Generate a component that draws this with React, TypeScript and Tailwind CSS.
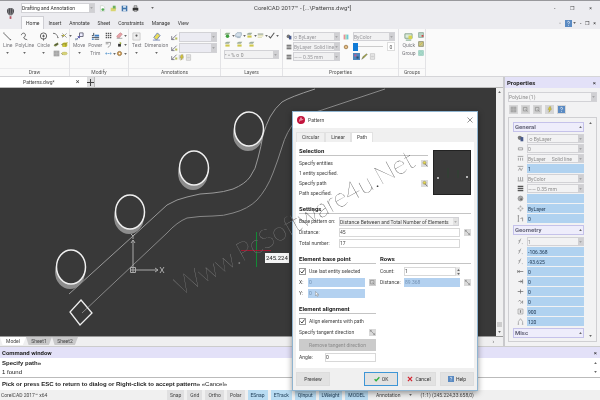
import type { ReactNode } from "react";
import { clsx } from "clsx";

const ICONS: Record<string, ReactNode> = {
  line: <path d="M1 1.500 8 8.500M.5 1h1M7.500 8.500h1.500" stroke="#555" />,
  polyline: <path d="M1.500 3.500C2 .5 6 .5 6 3.500S3 5 4.500 7s3 .5 3.500 2" stroke="#555" />,
  circle: (
    <g stroke="#555">
      <circle cx="5" cy="4.500" r="3.500" />
      <path d="M5 3v3M3.500 4.500h3M5 7v2.500" />
    </g>
  ),
  arc: <path d="M1 2c3 0 5 2 6 6M0 2h2M6 8h2" stroke="#555" />,
  cross: (
    <g>
      <path d="M2 2l6 6M8 2 2 8" stroke="#777" />
      <path d="M2 4h3v2H2z" fill="#c9c23a" />
    </g>
  ),
  leaf: (
    <g>
      <path d="M2 4.500 7 2l1 3-4 3-3-1z" fill="#7d8a4a" />
      <path d="M3 5.500 7 4" stroke="#333" />
    </g>
  ),
  box: (
    <g>
      <path d="M2 3.500 4 2h5v5L7 8.500H2z" fill="#cbc63c" />
      <path d="M2 4h5v4M7 4l2-2" stroke="#84802a" />
    </g>
  ),
  hatch: (
    <g>
      <path d="M1 1h8v8H1z" fill="#999" />
      <path d="M1 3h8M1 5h8M1 7h8M3 1v8M5 1v8M7 1v8" stroke="#ccc" strokeWidth=".5" />
    </g>
  ),
  pill: <ellipse cx="5" cy="5" rx="4" ry="2" fill="#d8d478" stroke="#a5a04c" strokeWidth=".5" />,
  move: (
    <g>
      <path d="M5 1h4v4H5z" stroke="#667" fill="#eef" />
      <path d="M1 9l4-4M3 5h2v2" stroke="#55a" />
      <path d="M0 7h3v2H0z" fill="#9ab" />
    </g>
  ),
  power: (
    <g>
      <path d="M3 1v3H1M1 6h8M4 8h5" stroke="#345" />
      <path d="M4 3h5v2H4z" fill="#3c7dc4" />
      <path d="M1 8h2" stroke="#3c7dc4" strokeWidth="1.500" />
    </g>
  ),
  grid: (
    <path
      d="M1 1h2v2H1zM4 1h2v2H4zM7 1h2v2H7zM1 4h2v2H1zM4 4h2v2H4zM7 4h2v2H7zM1 7h2v2H1zM4 7h2v2H4zM7 7h2v2H7z"
      fill="#555"
    />
  ),
  fillet: <path d="M1 2h7c0 4-1 6-4 7M1 4h4" stroke="#777" />,
  stretch: <path d="M1 5h8M2 3.500 1 5l1 1.500M8 3.500 9 5 8 6.500" stroke="#3d88c8" strokeDasharray="2 .7" />,
  eraser: (
    <g>
      <path d="M1 6 6 1l3 2-4 5H2z" fill="#e8a3a8" stroke="#a54a52" strokeWidth=".5" />
      <path d="M1 9h8" stroke="#888" />
    </g>
  ),
  brush: (
    <g>
      <path d="M3 4h4v4H3z" fill="#333" />
      <path d="M5 1 8 3 6 5z" fill="#9cab33" />
    </g>
  ),
  gear: (
    <g>
      <circle cx="5" cy="5" r="3" fill="#d9a866" stroke="#85612c" />
      <circle cx="5" cy="5" r="1" fill="#fff" />
    </g>
  ),
  text: (
    <g>
      <path d="M1 1h8v8H1z" fill="#eee" stroke="#ccc" />
      <circle cx="5" cy="4" r="1.200" fill="#555" />
    </g>
  ),
  dim: (
    <g>
      <path d="M2 6 6 1l3 3-4 5z" fill="#e9dc5a" stroke="#6a7fb0" />
      <path d="M1 9h8" stroke="#7d8ab8" />
    </g>
  ),
  slash: (
    <g>
      <path d="M1 8 8 1M1 3v5h4" stroke="#556" />
      <path d="M6 5h3v3H6z" fill="#b7bd5b" />
    </g>
  ),
  layer: (
    <g>
      <path d="M1 3 4 1h5L7 4H2z" fill="#9fae9d" />
      <path d="M2 5h6v3H2z" fill="#cfc84a" />
    </g>
  ),
  layerGreen: (
    <g>
      <path d="M1 3 3 1h6L7 4H1z" fill="#8fb48a" />
      <circle cx="5" cy="6" r="2.500" fill="#3fa03d" />
    </g>
  ),
  layerBlue: (
    <g>
      <path d="M1 3 3 1h6v4L7 7H1z" fill="#d3dfe9" stroke="#8fa3b4" />
      <path d="M3 8h5" stroke="#8fa3b4" />
    </g>
  ),
  layerList: (
    <g>
      <path d="M1 2h8v2H1z" fill="#a9b3a0" />
      <path d="M1 5h8v1H1zM1 7h6v1H1z" fill="#c9c878" />
    </g>
  ),
  check: <path d="M1 6 3.500 8.500 9 1" stroke="#555" strokeWidth="1.500" />,
  bulb: (
    <g>
      <circle cx="4" cy="4" r="3" fill="#777" />
      <path d="M5 3h4v6H5z" fill="#47598b" />
    </g>
  ),
  weights: <path d="M1 2h8M1 5h8M1 8h8" stroke="#555" strokeWidth="1.800" />,
  swatch: (
    <g>
      <path d="M1 1h3v8H1z" fill="#e98f9c" />
      <path d="M4 1h2v8H4z" fill="#a4d59b" />
      <path d="M6 1h3v8H6z" fill="#6bc8d8" />
    </g>
  ),
  match: (
    <g>
      <path d="M0 0h10v10H0z" fill="#4d86bd" />
      <path d="M2 2h3v3H2z" fill="#c75f8e" />
      <path d="M5 5h3v3H5z" fill="#2f4e6d" />
    </g>
  ),
  pencil: <path d="M1 9 3 5l5-4 1 1-5 5z" fill="#a5a743" stroke="#555" strokeWidth=".5" />,
  page: <path d="M2 1h6v8H2zM3 3h4M3 5h4M3 7h4" stroke="#bbb" />,
  quick: (
    <g>
      <path d="M1 2h8v5H1z" fill="#dcecdc" stroke="#84a088" />
      <path d="M5 4h4v4H5z" fill="#d6d552" />
      <path d="M2 9h6" stroke="#6a9a77" />
    </g>
  ),
  groupRed: (
    <g>
      <path d="M1 1h8v8H1z" fill="#b9d6c6" stroke="#6e8f80" />
      <path d="M6 5h3v3H6z" fill="#d04848" />
    </g>
  ),
  groupYellow: (
    <g>
      <path d="M1 1h8v8H1z" fill="#c8c78c" stroke="#6e6f50" />
      <path d="M2 8 8 2" stroke="#d6b32c" />
    </g>
  ),
  groupTeal: <path d="M1 1h8v8H1zM3 3h4v4H3z" fill="#b8e4d6" stroke="#83c0ad" />,
  newdoc: (
    <g>
      <path d="M2 1h4l2 2v6H2z" fill="#fff" stroke="#c8d2c8" />
      <circle cx="5.500" cy="6.500" r="2" fill="#55ad55" />
    </g>
  ),
  open: (
    <g>
      <path d="M1 4h8L8 9H1z" fill="#d9d571" />
      <path d="M4 1h4v4H4z" fill="#6bb05c" />
    </g>
  ),
  save: (
    <g>
      <path d="M1 1h8v8H1z" fill="#3f74ab" />
      <path d="M3 1h4v3H3zM3 6h4v3H3z" fill="#d4e2f0" />
    </g>
  ),
  print: (
    <g>
      <path d="M1 4h8v4H1z" fill="#333" />
      <path d="M3 1h4v3H3zM3 7h4v2H3z" fill="#ccc" stroke="#444" strokeWidth=".7" />
    </g>
  ),
  help: (
    <g>
      <path d="M0 0h10v10H0z" fill="#5a8ac2" />
      <path d="M3.500 3.500c0-2 3-2 3 0 0 1-1.500 1-1.500 2.500M5 7.500v1" stroke="#fff" />
    </g>
  ),
  pick: (
    <g>
      <path d="M0 0h10v10H0z" fill="#dcdcdc" />
      <circle cx="5" cy="4" r="2.200" fill="#e8d84e" stroke="#8d8a60" strokeWidth=".7" />
      <path d="M5.500 5 9 9" stroke="#555" />
    </g>
  ),
  flash: (
    <g>
      <path d="M1 1h7v7H1z" fill="#cfcfcf" />
      <path d="M5 1 3 5h2L4 9l4-5H6l1-3z" fill="#e3cf2f" stroke="#8d8430" strokeWidth=".5" />
    </g>
  ),
  measure: (
    <g>
      <path d="M0 0h10v10H0z" fill="#d9d9d9" />
      <path d="M2 2l6 6M2 4V2h2M8 6v2H6" stroke="#777" strokeWidth=".8" />
    </g>
  ),
  target: (
    <g>
      <path d="M0 0h10v10H0z" fill="#cfcfcf" />
      <path d="M2 2h5v5H2zM5 5l3 3" stroke="#8c8c8c" />
    </g>
  ),
  ok: <path d="M1 5.500 3.500 8 9 2" stroke="#2fae3c" strokeWidth="2.200" />,
  cancel: <path d="M1.500 1.500l7 7M8.500 1.500l-7 7" stroke="#d4202c" strokeWidth="2" />,
  sheet: <path d="M2 4h6v3H2z" stroke="#888" />,
  linetype: <path d="M1 2h8M2 4v4M5 4v4M8 4v4" stroke="#888" />,
  scale: <path d="M1 2h8M2 8l2-4 2 4 2-4" stroke="#888" />,
  bars: <path d="M2 8V3M5 8V3M8 8V3M1 8.500h8" stroke="#888" />,
  sphere: (
    <g>
      <circle cx="5" cy="5" r="3.500" fill="#aaa" stroke="#888" />
      <circle cx="6" cy="6" r="1.500" fill="#666" />
    </g>
  ),
  diamond: <path d="M5 1 6 3H4zM5 9 4 7h2zM1 5l2-1v2zM9 5 7 6V4z" stroke="#888" strokeWidth=".7" />,
  thick: <path d="M2 1v8M1 1h2M1 9h2M5 5l3-1v5" stroke="#777" />,
  vertex: <path d="M2 8C4 8 3 2 6 1M2 4h3M7 8h1" stroke="#888" />,
  start: <path d="M1 3v4M2 5h7M4 3.500 2 5l2 1.500" stroke="#666" />,
  end: <path d="M8 2v6M2 5h6M5 3.500 7 5 5 6.500" stroke="#666" />,
  plus: <path d="M1 5h8M5 2v6" stroke="#666" />,
  elev: <path d="M2 5l2-2 1 2M5 8l3-4v4" stroke="#777" />,
  area: (
    <g>
      <path d="M1.500 1.500h7v7h-7z" stroke="#999" />
      <path d="M4 3h2v4H4z" fill="#888" />
    </g>
  ),
  length: <path d="M2 9V5l3-4 3 4v4M1 9h2M7 9h2" stroke="#999" />,
};

function Icon({ name, className = "size-2" }: { name: string; className?: string }) {
  return (
    <svg viewBox="0 0 10 10" fill="none" className={clsx("shrink-0", className)} aria-hidden="true">
      {ICONS[name]}
    </svg>
  );
}

function Caret({ className = "" }: { className?: string }) {
  return (
    <svg viewBox="0 0 4 3" className={clsx("h-[2px] w-[3px] shrink-0", className)} aria-hidden="true">
      <path d="M0 0h4L2 3z" fill="#666" />
    </svg>
  );
}

type SelectProps = { label: string; value: string; id?: string; className?: string; arrow?: string };

function Select({ label, value, id, className, arrow = "bg-[#d0d0d3]" }: SelectProps) {
  return (
    <span className={clsx("flex min-w-0 items-stretch border border-[#d2d2d6]", className)}>
      <select id={id} aria-label={label} defaultValue={value} className="min-w-0 flex-1 appearance-none bg-transparent">
        <option>{value}</option>
      </select>
      <span className={clsx("grid w-[5px] shrink-0 place-items-center", arrow)}>
        <Caret className="opacity-40" />
      </span>
    </span>
  );
}

function IconButton({ icon, label, caret, size }: { icon: string; label: string; caret?: boolean; size?: string }) {
  return (
    <button aria-label={label} className="flex items-center gap-px">
      <Icon name={icon} className={size ?? "size-[7px]"} />
      {caret && <Caret />}
    </button>
  );
}

function BigTool({ icon, label, second }: { icon: string; label: string; second?: string }) {
  return (
    <button className="flex flex-col items-center self-start leading-[8px] text-[#77777c]">
      <Icon name={icon} className="size-[9px]" />
      <span>{label}</span>
      {second ? <span>{second}</span> : <Caret className="mt-[3px]" />}
    </button>
  );
}

function Group({ title, className, children }: { title: string; className: string; children: ReactNode }) {
  return (
    <section className={clsx("flex shrink-0 flex-col border-r border-[#e3e3e6]", className)}>
      <div className="flex flex-1 gap-[3px] px-[3px] pt-[3px]">{children}</div>
      <h2 className="border-t border-[#ececee] text-center leading-[7px] text-[#555]">{title}</h2>
    </section>
  );
}

const QUICK = [
  ["newdoc", "New"],
  ["open", "Open"],
  ["save", "Save"],
  ["print", "Print"],
];

const MENU = ["Home", "Insert", "Annotate", "Sheet", "Constraints", "Manage", "View"];

function TitleBar() {
  return (
    <header className="flex h-[29px] border-t border-[#98989c] bg-[#ececf0]">
      <svg viewBox="0 0 10 14" className="mx-[6px] mt-[6px] h-[13px] w-[9px] shrink-0" aria-hidden="true">
        <path d="M5 1c5 0 5 5 1.500 8h-3C0 6 0 1 5 1z" fill="#4b4b50" />
        <path d="M5 1v8M3 2c-1 2 0 5 1 7M7 2c1 2 0 5-1 7" stroke="#bbb" strokeWidth=".5" fill="none" />
        <path d="M4 10h2v3H4z" fill="#b55563" />
      </svg>
      <div className="flex min-w-0 flex-1 flex-col justify-between">
        <div className="flex items-center pt-[2px]">
          <Select label="Workspace" value="Drafting and Annotation" className="h-[10px] w-[74px] bg-white text-[#333]" />
          <div className="flex items-center gap-[4px] pl-1">
            {QUICK.map(([icon, label]) => (
              <IconButton key={icon} icon={icon} label={label} />
            ))}
            <button aria-label="Customize" className="pl-2">
              <Caret />
            </button>
          </div>
          <h1 className="flex-1 pl-[100px] text-[6px] text-[#444]">CorelCAD 2017™ - [...\Patterns.dwg*]</h1>
          <div className="flex w-[46px] justify-between pr-2 text-[#444]">
            <button aria-label="Minimize">-</button>
            <button aria-label="Restore">❐</button>
            <button aria-label="Close">×</button>
          </div>
        </div>
        <nav className="flex items-end text-[#333]">
          {MENU.map((item) => (
            <button
              key={item}
              className={clsx("px-1 leading-[12px]", item === "Home" && "border border-b-0 border-[#cfcfd4] bg-[#fafafb]")}
            >
              {item}
            </button>
          ))}
          <div className="ml-auto flex items-center gap-1 pr-1 pb-[2px]">
            <button aria-label="Favourites" className="text-[#999]">◦</button>
            <IconButton icon="help" label="Help" caret />
            <button aria-label="Minimize drawing">-</button>
            <button aria-label="Restore drawing">❐</button>
            <button aria-label="Close drawing">×</button>
          </div>
        </nav>
      </div>
    </header>
  );
}

function Ribbon() {
  return (
    <div className="flex h-[48px] overflow-hidden border-b border-[#d5d5d8] bg-[#fafafa]">
      <Group title="Draw" className="w-[70px]">
        <BigTool icon="line" label="Line" />
        <BigTool icon="polyline" label="PolyLine" />
        <BigTool icon="circle" label="Circle" />
        <div className="-mr-[3px] grid grid-cols-2 content-start gap-x-px gap-y-[2px]">
          <IconButton icon="arc" label="Arc" caret />
          <IconButton icon="cross" label="Point" caret />
          <IconButton icon="leaf" label="Ellipse" caret />
          <IconButton icon="box" label="Region" />
          <IconButton icon="hatch" label="Hatch" caret />
          <IconButton icon="pill" label="Cloud" />
        </div>
      </Group>
      <Group title="Modify" className="w-[59px]">
        <BigTool icon="move" label="Move" />
        <BigTool icon="power" label="Power" second="Trim" />
        <div className="ml-auto grid grid-cols-2 content-start gap-x-px gap-y-[2px]">
          <IconButton icon="grid" label="Pattern" />
          <IconButton icon="eraser" label="Delete" caret />
          <IconButton icon="fillet" label="Fillet" />
          <IconButton icon="brush" label="Copy properties" caret />
          <IconButton icon="stretch" label="Stretch" caret />
          <IconButton icon="gear" label="Explode" caret />
        </div>
      </Group>
      <Group title="Annotations" className="w-[92px]">
        <BigTool icon="text" label="Text" />
        <BigTool icon="dim" label="Dimension" />
        <div className="flex min-w-0 flex-1 flex-col gap-px">
          <div className="flex items-center gap-px">
            <Icon name="slash" className="size-[7px]" />
            <Select label="Text style" value="" className="h-[10px] flex-1 bg-[#ebebf2]" />
          </div>
          <div className="flex items-center gap-px">
            <Icon name="slash" className="size-[7px]" />
            <Select label="Dimension style" value="" className="h-[10px] flex-1 bg-[#ebebf2]" />
          </div>
          <div className="flex">
            <IconButton icon="slash" label="Leader" />
            <IconButton icon="flash" label="Tolerance" />
            <IconButton icon="page" label="Table" />
          </div>
        </div>
      </Group>
      <Group title="Layers" className="w-[62px]">
        <div className="flex min-w-0 flex-1 flex-col gap-[2px]">
          <div className="flex justify-between">
            <IconButton icon="layerGreen" label="Layers manager" caret />
            <IconButton icon="layerBlue" label="Layer state" caret />
            <IconButton icon="layer" label="Isolate layer" caret />
            <IconButton icon="layerList" label="Layer list" caret />
            <IconButton icon="check" label="Activate layer" caret />
          </div>
          <div className="flex gap-[5px]">
            <IconButton icon="layer" label="Freeze layer" />
            <IconButton icon="layer" label="Hide layer" />
            <IconButton icon="layer" label="Lock layer" />
          </div>
          <Select label="Active layer" value="• ▫ % ○ 0" className="h-[9px] bg-[#f1f1f2] text-[#888]" />
        </div>
      </Group>
      <Group title="Properties" className="w-[116px]">
        <div className="flex w-[54px] flex-col gap-px text-[#97979b]">
          {[
            ["bulb", "Line colour", "○ ByLayer"],
            ["weights", "Line style", "ByLayer\u00a0 Solid line"],
            ["weights", "Line weight", "—— 0.35 mm"],
          ].map(([icon, label, value]) => (
            <div key={label} className="flex items-center gap-px">
              <Icon name={icon} className="size-[6px]" />
              <Select label={label} value={value} className="h-[9px] flex-1 bg-[#f1f1f2]" />
            </div>
          ))}
        </div>
        <div className="flex min-w-0 flex-1 flex-col gap-px text-[#97979b]">
          <div className="flex items-center gap-1">
            <Icon name="swatch" className="size-[6px]" />
            <Select label="Print colour" value="ByColor" className="h-[9px] flex-1 bg-[#f1f1f2]" />
          </div>
          <div className="flex h-[9px] items-center gap-1">
            <Icon name="gear" className="size-[6px]" />
            <input
              type="range"
              aria-label="Transparency"
              defaultValue={0}
              className="h-2 min-w-0 flex-1 appearance-none bg-[linear-gradient(#ccc,#ccc)] bg-[length:100%_1px] bg-center bg-no-repeat [&::-webkit-slider-thumb]:h-2 [&::-webkit-slider-thumb]:w-[5px] [&::-webkit-slider-thumb]:appearance-none [&::-webkit-slider-thumb]:bg-[#0f7ad6]"
            />
            <input aria-label="Transparency value" defaultValue="0" className="h-[9px] w-2 border border-[#ddd] bg-white text-center text-[#555]" />
          </div>
          <div className="flex h-[9px] items-center gap-px pl-[10px]">
            <IconButton icon="match" label="Match" />
            <IconButton icon="pencil" label="Edit" />
            <IconButton icon="page" label="List" />
          </div>
        </div>
      </Group>
      <Group title="Groups" className="w-[27px]">
        <BigTool icon="quick" label="Quick" second="Group" />
        <div className="flex flex-col gap-[3px]">
          <IconButton icon="groupRed" label="Ungroup" size="size-[6px]" />
          <IconButton icon="groupYellow" label="Edit group" size="size-[6px]" />
          <IconButton icon="groupTeal" label="Group manager" size="size-[6px]" />
        </div>
      </Group>
    </div>
  );
}

const HOLES = [
  { x: 249, y: 129 },
  { x: 194, y: 168 },
  { x: 130, y: 212 },
  { x: 71, y: 267 },
];

function Drawing() {
  return (
    <svg className="block size-full" fill="none">
      <g transform="translate(0 -88)">
        <path
          d="M69 294 143 227 167 205Q177 199 187 197 200 193 213 193 224 192 233 189 245 184 250 177 256 169 258 158 261 147 263 135 266 125 270 117 275 108 282 102 290 97 315 89"
          stroke="#999"
        />
        <path
          d="M82 313 133 265 167 233Q177 222 187 218 200 216 213 216 224 216 233 213 248 209 257 200 267 189 273 173 278 160 282 147 286 132 297 119 305 115 322 110L385 89"
          stroke="#888"
        />
        {HOLES.map((h) => (
          <g key={h.x}>
            <ellipse cx={h.x - 1} cy={h.y + 5} rx="15" ry="17" fill="#8d8d8d" />
            <ellipse cx={h.x} cy={h.y} rx="14.500" ry="17" fill="#393939" stroke="#f0f0f0" strokeWidth="1.500" />
          </g>
        ))}
        <path d="M81 300 92 313 80 325 70 312z" stroke="#eee" strokeWidth="1.300" />
        <g stroke="#aaa">
          <path d="M133 267V240M131 243l2-3 2 3M136 270h22M155 268l3 2-3 2M130.500 267.500h5v5h-5zM133 267v6M130 270h6" />
          <path d="M131 234l2 2 2-2M133 236v3M160 267l4 6M164 267l-4 6" />
        </g>
        <path d="M256.500 232v35" stroke="#128a35" />
        <path d="M241 250.500h30" stroke="#a01830" />
      </g>
    </svg>
  );
}

function Workspace() {
  return (
    <main className="flex min-w-0 flex-1 flex-col">
      <div className="flex h-[11px] items-stretch border-b border-[#bbb] bg-[#efeff1] text-[#444]">
        <div className="flex w-[87px] items-center bg-white pl-[23px]">
          <span className="flex-1 leading-[9px]">Patterns.dwg*</span>
          <button aria-label="Close tab" className="w-[19px] text-center text-[7px]">×</button>
        </div>
        <button aria-label="New tab" className="grid w-2 place-items-center border-r border-[#bbb] bg-[#dededf]">
          <svg viewBox="0 0 7 7" className="size-[7px]">
            <path d="M3.500 0v7M0 3.500h7" stroke="#444" />
          </svg>
        </button>
      </div>
      <div className="flex min-h-0 flex-1">
        <div className="relative min-w-0 flex-1 overflow-hidden bg-[#393939]">
          <Drawing />
          <output className="absolute top-[165px] left-[265px] bg-[#f4f4f4] px-px text-[6px] leading-[10px] text-[#222]">245.224</output>
        </div>
        <div className="flex w-[7px] flex-col items-center justify-between bg-[#f0f0f0] py-[3px]">
          <Caret className="rotate-180" />
          <span className="mt-auto mb-1 h-[5px] w-[5px] bg-[#ccc]" />
          <Caret />
        </div>
      </div>
      <div className="flex h-[10px] items-start border-t border-[#999] bg-[#efeff0] text-[#444]">
        {["Model", "Sheet1", "Sheet2"].map((name) => (
          <button
            key={name}
            className={clsx(
              "w-[26px] leading-[8px] [clip-path:polygon(0_0,100%_0,88%_100%,10%_100%)]",
              name === "Model" ? "bg-white" : "bg-[#c9c9ca]",
            )}
          >
            {name}
          </button>
        ))}
        <span className="ml-auto pr-[9px] leading-[8px]">›</span>
      </div>
    </main>
  );
}

type Prop = { icon: string; label: string; value: string; kind?: "select" };

const GENERAL: Prop[] = [
  { icon: "bulb", label: "Line colour", value: "\u00a0○ ByLayer", kind: "select" },
  { icon: "sheet", label: "Layer", value: "0", kind: "select" },
  { icon: "linetype", label: "Line style", value: "ByLayer\u00a0\u00a0\u00a0\u00a0 Solid line", kind: "select" },
  { icon: "scale", label: "Line scale", value: "1" },
  { icon: "bars", label: "Print style", value: "ByColor", kind: "select" },
  { icon: "weights", label: "Line weight", value: "—— 0.35 mm", kind: "select" },
  { icon: "sphere", label: "Hyperlink", value: "" },
  { icon: "diamond", label: "Transparency", value: "ByLayer" },
  { icon: "thick", label: "Thickness", value: "0" },
];

const GEOMETRY: Prop[] = [
  { icon: "vertex", label: "Vertex", value: "1", kind: "select" },
  { icon: "vertex", label: "Vertex X", value: "-106.368" },
  { icon: "vertex", label: "Vertex Y", value: "-93.625" },
  { icon: "start", label: "Start width", value: "0" },
  { icon: "end", label: "End width", value: "0" },
  { icon: "plus", label: "Global width", value: "0" },
  { icon: "elev", label: "Elevation", value: "0" },
  { icon: "area", label: "Area", value: "900" },
  { icon: "length", label: "Length", value: "120" },
];

function PropSection({ title, rows }: { title: string; rows: Prop[] }) {
  return (
    <section>
      <h3 className="flex items-center justify-between border border-[#c5c2ea] bg-[#eeedfb] px-px text-[6px] leading-[8px] font-bold text-[#66667a]">
        {title}
        <Caret className="rotate-180" />
      </h3>
      {rows.length > 0 && (
        <div className="flex flex-col gap-px pt-[2px] pb-[2px] pl-1">
          {rows.map((row) => (
            <div key={row.label} className="flex h-[9px] items-center gap-[3px]">
              <Icon name={row.icon} className="size-[7px]" />
              {row.kind ? (
                <Select label={row.label} value={row.value} className="h-[9px] flex-1 bg-[#f2f2f3] text-[#8b8b8b]" />
              ) : (
                <input aria-label={row.label} defaultValue={row.value} className="h-[9px] min-w-0 flex-1 bg-[#b0d2f0] pl-px text-[#1c3550]" />
              )}
            </div>
          ))}
        </div>
      )}
    </section>
  );
}

function PropertiesPanel() {
  return (
    <aside className="flex w-[97px] shrink-0 flex-col border-l-2 border-[#c9c9cc] bg-[#f2f2f3]">
      <div className="flex items-center justify-between bg-[#e3e1f8] px-[2px] text-[6px] leading-[11px] text-[#222]">
        <h2 className="font-bold">Properties</h2>
        <button aria-label="Close properties" className="pr-[2px]">×</button>
      </div>
      <div className="flex min-h-0 flex-1 flex-col gap-[3px] px-[3px] pt-1 pb-1">
        <Select label="Selected entity" value="PolyLine (1)" className="h-[10px] shrink-0 bg-[#f4f4f5] text-[#8b8b8b]" />
        <div className="flex gap-[3px] pl-px">
          {["hatch", "target", "target", "flash", "help"].map((icon, i) => (
            <button key={i} aria-label={`Selection tool ${i + 1}`} className="bg-[#d6d6d7] p-px">
              <Icon name={icon} className="size-[7px]" />
            </button>
          ))}
        </div>
        <div className="flex min-h-0 flex-1 overflow-hidden border border-[#cfcfd2]">
          <div className="min-w-0 flex-1 pt-1 pl-1">
            <PropSection title="General" rows={GENERAL} />
            <PropSection title="Geometry" rows={GEOMETRY} />
            <PropSection title="Misc" rows={[]} />
          </div>
          <div className="flex w-3 flex-col items-center justify-between py-1">
            <Caret className="rotate-180" />
            <Caret />
          </div>
        </div>
      </div>
    </aside>
  );
}

function CommandWindow() {
  return (
    <section className="border-t border-[#ccc] bg-white text-[6px] text-[#222]">
      <div className="flex items-center justify-between bg-[#e3e1f8] pr-[3px] pl-[2px] leading-[11px]">
        <h2 className="font-bold">Command window</h2>
        <button aria-label="Close command window">×</button>
      </div>
      <div className="flex justify-between border-b border-[#bbb] pr-[3px] pl-[2px]">
        <div className="pt-px font-['Liberation_Sans',sans-serif] leading-[9px]">
          <p className="font-bold">Specify path»</p>
          <p>1 found</p>
        </div>
        <div className="flex flex-col justify-around py-px">
          <Caret className="rotate-180" />
          <Caret />
        </div>
      </div>
      <p className="pl-[2px] font-['Liberation_Sans',sans-serif] leading-[12px]">
        <b>Pick or press ESC to return to dialog or Right-click to accept pattern»</b> «Cancel»
      </p>
    </section>
  );
}

const MODES = [
  { name: "Snap" },
  { name: "Grid" },
  { name: "Ortho" },
  { name: "Polar" },
  { name: "ESnap", on: true },
  { name: "ETrack", on: true },
  { name: "QInput", on: true },
  { name: "LWeight", on: true },
  { name: "MODEL", on: true },
];

function StatusBar() {
  return (
    <footer className="flex h-[10px] items-stretch bg-[#f0f0f0] leading-[10px] text-[#444]">
      <span className="w-[167px] pl-px">CorelCAD 2017™ x64</span>
      <div className="flex gap-[3px]">
        {MODES.map((m) => (
          <button key={m.name} className={clsx("px-[3px]", m.on ? "bg-[#b9dcf2] text-[#23425c]" : "bg-[#e0e0e1]")}>
            {m.name}
          </button>
        ))}
      </div>
      <button className="flex items-center gap-[9px] pr-1 pl-2">
        Annotation <Caret />
      </button>
      <span className="pl-1">(1:1) (245.224,33.658,0)</span>
    </footer>
  );
}

function Heading({ children }: { children: ReactNode }) {
  return <h3 className="border-b border-[#c4c4c4] text-[6px] leading-[9px] font-bold text-[#222]">{children}</h3>;
}

function Preview() {
  return (
    <svg className="h-[45px] w-[38px] shrink-0 border border-[#222] bg-[#393939]" aria-label="Preview">
      <path d="M3 27h2M32 26h2" stroke="#ddd" strokeWidth="1.500" />
      <path d="M14 17v10M24 19v8" stroke="#2f4433" />
    </svg>
  );
}

const FIELD = "h-[9px] min-w-0 flex-1 border border-[#d8d8d8] bg-white";
const FIELD_BLUE = "h-[9px] min-w-0 flex-1 bg-[#b3d1f0] pl-px text-[#7492b3]";

function PatternDialog() {
  return (
    <div
      role="dialog"
      aria-label="Pattern"
      className="absolute top-[111px] left-[292px] w-[186px] border border-[#8fb4d0] bg-[#f0f0f0] text-[#444] shadow-[0_2px_6px_#0006]"
    >
      <div className="flex h-[16px] items-center gap-[3px] bg-white px-1">
        <svg viewBox="0 0 10 10" className="size-[8px]" aria-hidden="true">
          <circle cx="5" cy="5" r="5" fill="#c2143c" />
          <path d="M3 7 5 2l1 3 2-1M3 5h3" stroke="#f2b6c3" fill="none" />
        </svg>
        <span className="flex-1">Pattern</span>
        <button aria-label="Close">
          <svg viewBox="0 0 6 6" className="size-[6px]">
            <path d="M.5.5l5 5M5.500.5l-5 5" stroke="#777" strokeWidth=".8" />
          </svg>
        </button>
      </div>
      <div className="px-[3px] pt-1">
        <div role="tablist" className="flex items-end">
          {["Circular", "Linear", "Path"].map((tab) => (
            <button
              key={tab}
              role="tab"
              aria-selected={tab === "Path"}
              className={clsx("border border-b-0 border-[#e2e2e2] px-[5px] leading-[9px]", tab === "Path" ? "bg-white" : "bg-[#f0f0f0]")}
            >
              {tab}
            </button>
          ))}
        </div>
        <div className="bg-white px-[3px] pt-[4px] pb-[6px]">
          <div className="flex justify-between">
            <div className="w-[129px]">
              <Heading>Selection</Heading>
              <div className="flex flex-col pt-[2px] leading-[10px]">
                <div className="flex items-center justify-between">
                  Specify entities <IconButton icon="pick" label="Specify entities" />
                </div>
                <p>1 entity specified.</p>
                <div className="flex items-center justify-between">
                  Specify path <IconButton icon="pick" label="Specify path" />
                </div>
                <p>Path specified.</p>
              </div>
            </div>
            <div className="pt-1">
              <Preview />
            </div>
          </div>

          <div className="pt-[6px]">
            <Heading>Settings</Heading>
          </div>
          <div className="flex flex-col gap-[2px] pt-[3px] leading-[9px]">
            <div className="flex">
              <label htmlFor="base" className="w-[40px]">Base pattern on:</label>
              <Select id="base" label="Base pattern on" value="Distance Between and Total Number of Elements" className="h-[9px] w-[120px] bg-[#f3f3f3]" arrow="bg-[#e2e2e2]" />
            </div>
            <div className="flex items-center">
              <label htmlFor="distance" className="w-[40px]">Distance:</label>
              <input id="distance" defaultValue="45" className={FIELD} />
              <span className="pl-1">
                <IconButton icon="measure" label="Pick distance" />
              </span>
            </div>
            <div className="flex pr-[11px]">
              <label htmlFor="total" className="w-[40px]">Total number:</label>
              <input id="total" defaultValue="17" className={FIELD} />
            </div>
          </div>

          <div className="flex gap-1 pt-[6px]">
            <div className="w-[77px]">
              <Heading>Element base point</Heading>
              <div className="flex flex-col gap-[2px] pt-[3px] leading-[9px]">
                <label className="flex items-center gap-[3px]">
                  <Tick /> Use last entity selected
                </label>
                <div className="flex items-center">
                  <label htmlFor="bx" className="w-[9px]">X:</label>
                  <input id="bx" defaultValue="0" className={FIELD_BLUE} />
                  <span className="pl-1">
                    <IconButton icon="target" label="Pick point" />
                  </span>
                </div>
                <div className="relative flex pr-[11px]">
                  <label htmlFor="by" className="w-[9px]">Y:</label>
                  <input id="by" defaultValue="0" className={FIELD_BLUE} />
                  <svg viewBox="0 0 5 7" className="pointer-events-none absolute top-[2px] left-4 h-[6px] w-1" aria-hidden="true">
                    <path d="M.5.5v5l1.500-1 1 2 1-.5-1-2h1.500z" fill="#fff" stroke="#666" strokeWidth=".5" />
                  </svg>
                </div>
              </div>
            </div>
            <div className="min-w-0 flex-1">
              <Heading>Rows</Heading>
              <div className="flex flex-col gap-[2px] pt-[3px] leading-[9px]">
                <div className="flex items-center pr-[11px]">
                  <label htmlFor="count" className="w-[24px]">Count:</label>
                  <input id="count" defaultValue="1" className={FIELD} />
                  <span className="flex h-[9px] w-1 flex-col items-center justify-center gap-[2px] bg-[#e6e6e6]">
                    <Caret className="rotate-180" />
                    <Caret />
                  </span>
                </div>
                <div className="flex items-center">
                  <label htmlFor="rowdist" className="w-[24px]">Distance:</label>
                  <input id="rowdist" defaultValue="89.368" className={FIELD_BLUE} />
                  <span className="pl-1">
                    <IconButton icon="measure" label="Pick row distance" />
                  </span>
                </div>
              </div>
            </div>
          </div>

          <div className="w-[77px] pt-[6px]">
            <Heading>Element alignment</Heading>
            <div className="flex flex-col gap-[2px] pt-[3px] leading-[9px]">
              <label className="flex items-center gap-[3px]">
                <Tick /> Align elements with path
              </label>
              <div className="flex items-center justify-between">
                Specify tangent direction <IconButton icon="measure" label="Specify tangent direction" />
              </div>
              <button className="bg-[#cbcbcb] leading-[12px] text-[#8b8b8b]">Remove tangent direction</button>
              <div className="flex">
                <label htmlFor="angle" className="w-[26px]">Angle:</label>
                <input id="angle" defaultValue="0" className={FIELD} />
              </div>
            </div>
          </div>
        </div>
        <div className="flex gap-1 py-[4px] text-[#333]">
          <button className="mr-auto w-[34px] border border-[#ddd] bg-[#e2e2e2] leading-[12px]">Preview</button>
          <DialogButton icon="ok" label="OK" className="border-[#3e96d6]" />
          <DialogButton icon="cancel" label="Cancel" className="border-[#ddd]" />
          <DialogButton icon="help" label="Help" className="border-[#ddd]" />
        </div>
      </div>
    </div>
  );
}

function Tick() {
  return (
    <span className="grid size-[7px] place-items-center">
      <input
        type="checkbox"
        defaultChecked
        className="col-start-1 row-start-1 size-[7px] appearance-none border border-[#999] bg-white"
      />
      <svg viewBox="0 0 5 5" className="pointer-events-none col-start-1 row-start-1 size-[5px]">
        <path d="M.5 2.500 2 4l2.500-3.500" stroke="#444" fill="none" />
      </svg>
    </span>
  );
}

function DialogButton({ icon, label, className }: { icon: string; label: string; className: string }) {
  return (
    <button className={clsx("flex w-[34px] items-center justify-center gap-[2px] border bg-[#e2e2e2] leading-[12px]", className)}>
      <Icon name={icon} className="size-[6px]" />
      {label}
    </button>
  );
}

function Watermark() {
  return (
    <svg className="pointer-events-none absolute top-[130px] left-[160px] h-[180px] w-[270px] mix-blend-difference">
      <text
        x="0"
        y="0"
        transform="translate(21 166) rotate(-29)"
        fontSize="26"
        fontWeight="100"
        fill="#c4c4c4"
        fontFamily="Lato, Liberation Sans, sans-serif"
      >
        Www.PcSoftware4u.Net
      </text>
    </svg>
  );
}

export default function App() {
  return (
    <div className="relative isolate flex h-screen flex-col overflow-hidden bg-[#f0f0f0] font-[Roboto,Lato,sans-serif] text-[5px] leading-[8px] whitespace-nowrap">
      <TitleBar />
      <Ribbon />
      <div className="flex min-h-0 flex-1">
        <Workspace />
        <PropertiesPanel />
      </div>
      <CommandWindow />
      <StatusBar />
      <PatternDialog />
      <Watermark />
    </div>
  );
}
